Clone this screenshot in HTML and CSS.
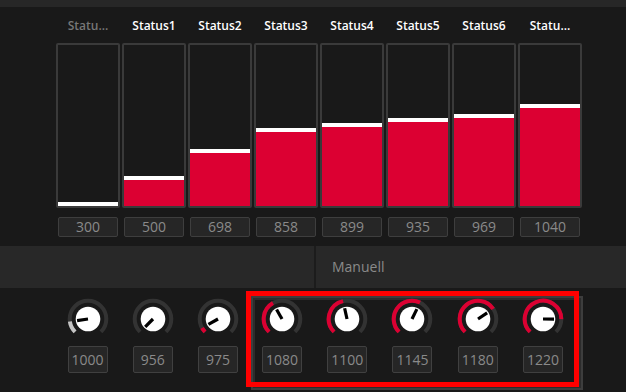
FILE: index.html
```html
<!DOCTYPE html>
<html>
<head>
<meta charset="utf-8">
<link rel="stylesheet" href="styles.css">
</head>
<body>
<div class="app">
  <div class="topbar"></div>
  <div class="bars">
    <div class="col off"><div class="label">Statu...</div><div class="bar"><div class="cap"></div><div class="red" style="height:0px"></div></div><div class="val">300</div></div>
    <div class="col"><div class="label">Status1</div><div class="bar"><div class="cap"></div><div class="red" style="height:26px"></div></div><div class="val">500</div></div>
    <div class="col"><div class="label">Status2</div><div class="bar"><div class="cap"></div><div class="red" style="height:53px"></div></div><div class="val">698</div></div>
    <div class="col"><div class="label">Status3</div><div class="bar"><div class="cap"></div><div class="red" style="height:74px"></div></div><div class="val">858</div></div>
    <div class="col"><div class="label">Status4</div><div class="bar"><div class="cap"></div><div class="red" style="height:79px"></div></div><div class="val">899</div></div>
    <div class="col"><div class="label">Status5</div><div class="bar"><div class="cap"></div><div class="red" style="height:84px"></div></div><div class="val">935</div></div>
    <div class="col"><div class="label">Status6</div><div class="bar"><div class="cap"></div><div class="red" style="height:88px"></div></div><div class="val">969</div></div>
    <div class="col"><div class="label">Statu...</div><div class="bar"><div class="cap"></div><div class="red" style="height:98px"></div></div><div class="val">1040</div></div>
  </div>
  <div class="band">
    <div class="band-left"></div>
    <div class="band-right">Manuell</div>
  </div>
  <div class="knobs">
    <div class="group">
      <div class="knob">
        <svg viewBox="-21 -21 42 42" width="42" height="42">
          <path class="track" d="M -12.94 12.94 A 18.3 18.3 0 1 1 12.94 12.94"/>
          <path class="arc gray" d="M -12.94 12.94 A 18.3 18.3 0 0 1 -18.12 2.58"/>
          <circle r="12.3" class="face"/>
          <line x1="0" y1="0" x2="-10.9" y2="1.55" class="ptr"/>
        </svg>
        <div class="kval">1000</div>
      </div>
      <div class="knob">
        <svg viewBox="-21 -21 42 42" width="42" height="42">
          <path class="track" d="M -12.94 12.94 A 18.3 18.3 0 1 1 12.94 12.94"/>
          <circle r="12.3" class="face"/>
          <line x1="0" y1="0" x2="-7.78" y2="7.78" class="ptr"/>
        </svg>
        <div class="kval">956</div>
      </div>
      <div class="knob">
        <svg viewBox="-21 -21 42 42" width="42" height="42">
          <path class="track" d="M -12.94 12.94 A 18.3 18.3 0 1 1 12.94 12.94"/>
          <path class="arc" d="M -12.94 12.94 A 18.3 18.3 0 0 1 -15.91 9.04"/>
          <circle r="12.3" class="face"/>
          <line x1="0" y1="0" x2="-9.57" y2="5.43" class="ptr"/>
        </svg>
        <div class="kval">975</div>
      </div>
    </div>
    <div class="panel">
      <div class="knob">
        <svg viewBox="-21 -21 42 42" width="42" height="42">
          <path class="track" d="M -12.94 12.94 A 18.3 18.3 0 1 1 12.94 12.94"/>
          <path class="arc" d="M -12.94 12.94 A 18.3 18.3 0 0 1 -9.04 -15.91"/>
          <circle r="12.3" class="face"/>
          <line x1="0" y1="0" x2="-5.43" y2="-9.56" class="ptr"/>
        </svg>
        <div class="kval">1080</div>
      </div>
      <div class="knob">
        <svg viewBox="-21 -21 42 42" width="42" height="42">
          <path class="track" d="M -12.94 12.94 A 18.3 18.3 0 1 1 12.94 12.94"/>
          <path class="arc" d="M -12.94 12.94 A 18.3 18.3 0 0 1 -3.93 -17.87"/>
          <circle r="12.3" class="face"/>
          <line x1="0" y1="0" x2="-2.36" y2="-10.74" class="ptr"/>
        </svg>
        <div class="kval">1100</div>
      </div>
      <div class="knob">
        <svg viewBox="-21 -21 42 42" width="42" height="42">
          <path class="track" d="M -12.94 12.94 A 18.3 18.3 0 1 1 12.94 12.94"/>
          <path class="arc" d="M -12.94 12.94 A 18.3 18.3 0 0 1 8.05 -16.43"/>
          <circle r="12.3" class="face"/>
          <line x1="0" y1="0" x2="4.84" y2="-9.88" class="ptr"/>
        </svg>
        <div class="kval">1145</div>
      </div>
      <div class="knob">
        <svg viewBox="-21 -21 42 42" width="42" height="42">
          <path class="track" d="M -12.94 12.94 A 18.3 18.3 0 1 1 12.94 12.94"/>
          <path class="arc" d="M -12.94 12.94 A 18.3 18.3 0 1 1 15.19 -10.21"/>
          <circle r="12.3" class="face"/>
          <line x1="0" y1="0" x2="9.13" y2="-6.14" class="ptr"/>
        </svg>
        <div class="kval">1180</div>
      </div>
      <div class="knob">
        <svg viewBox="-21 -21 42 42" width="42" height="42">
          <path class="track" d="M -12.94 12.94 A 18.3 18.3 0 1 1 12.94 12.94"/>
          <path class="arc" d="M -12.94 12.94 A 18.3 18.3 0 1 1 18.3 0.13"/>
          <circle r="12.3" class="face"/>
          <line x1="0" y1="0" x2="11" y2="0.08" class="ptr"/>
        </svg>
        <div class="kval">1220</div>
      </div>
      <div class="highlight"></div>
    </div>
  </div>
</div>
</body>
</html>
```

FILE: styles.css
```css
html, body {
  margin: 0;
  padding: 0;
  background: #191919;
}

body {
  width: 626px;
  height: 392px;
  overflow: hidden;
  font-family: "Open Sans", "Noto Sans", sans-serif;
}

.app {
  width: 626px;
  height: 392px;
  background: #191919;
}

.topbar {
  height: 7px;
  background: #272727;
}

.bars {
  display: flex;
  gap: 2px;
  padding-left: 56px;
}

.col {
  width: 64px;
  display: flex;
  flex-direction: column;
  align-items: center;
}

.label {
  width: 100%;
  height: 36px;
  box-sizing: border-box;
  padding-top: 12px;
  line-height: 14px;
  font-size: 12px;
  font-weight: 600;
  color: #ffffff;
  text-align: center;
  white-space: nowrap;
}

.col.off .label {
  color: #777777;
}

.bar {
  width: 64px;
  height: 165px;
  box-sizing: border-box;
  border: 2px solid #3a3a3a;
  border-radius: 2px;
  display: flex;
  flex-direction: column;
  justify-content: flex-end;
  background: #191919;
}

.cap {
  height: 4px;
  background: #ffffff;
  flex: none;
}

.red {
  background: #dc0032;
  flex: none;
}

.val {
  margin-top: 9px;
  width: 60px;
  height: 20px;
  box-sizing: border-box;
  border: 1px solid #3e3e3e;
  border-radius: 2px;
  background: #262626;
  color: #8a8a8a;
  font-size: 14px;
  line-height: 18px;
  text-align: center;
}

.band {
  margin-top: 9px;
  height: 42px;
  display: flex;
  background: #1c1c1c;
}

.band-left {
  width: 314px;
  background: #282828;
}

.band-right {
  margin-left: 2px;
  flex: 1;
  background: #282828;
  color: #8a8a8a;
  font-size: 14px;
  line-height: 42px;
  padding-left: 16px;
}

.knobs {
  display: flex;
  align-items: flex-start;
  padding-top: 8px;
}

.group {
  display: flex;
  gap: 11.25px;
  padding-left: 60.6px;
  margin-top: 4px;
}

.panel {
  position: relative;
  margin-left: 5.9px;
  width: 332px;
  height: 94px;
  box-sizing: border-box;
  border: 2px solid #3d3d3d;
  padding: 2px;
  box-shadow: inset 0 0 0 2px #2c2c2c;
  display: flex;
  gap: 11.25px;
  align-items: flex-start;
}

.knob {
  width: 54px;
  display: flex;
  flex-direction: column;
  align-items: center;
}

.knob svg {
  display: block;
  margin-top: -2px;
}

.track {
  fill: none;
  stroke: #333333;
  stroke-width: 4;
}

.arc {
  fill: none;
  stroke: #dc0032;
  stroke-width: 4;
}

.arc.gray {
  stroke: #c4c4c4;
}

.face {
  fill: #ffffff;
}

.ptr {
  stroke: #000000;
  stroke-width: 3.2;
}

.kval {
  margin-top: 6px;
  width: 40px;
  height: 27px;
  box-sizing: border-box;
  border: 1px solid #404040;
  border-radius: 2px;
  background: #262626;
  color: #8a8a8a;
  font-size: 14px;
  line-height: 25px;
  text-align: center;
}

.highlight {
  position: absolute;
  left: -7px;
  top: -7px;
  right: 2px;
  bottom: 1px;
  border: 5px solid #ff0000;
  pointer-events: none;
}
```
